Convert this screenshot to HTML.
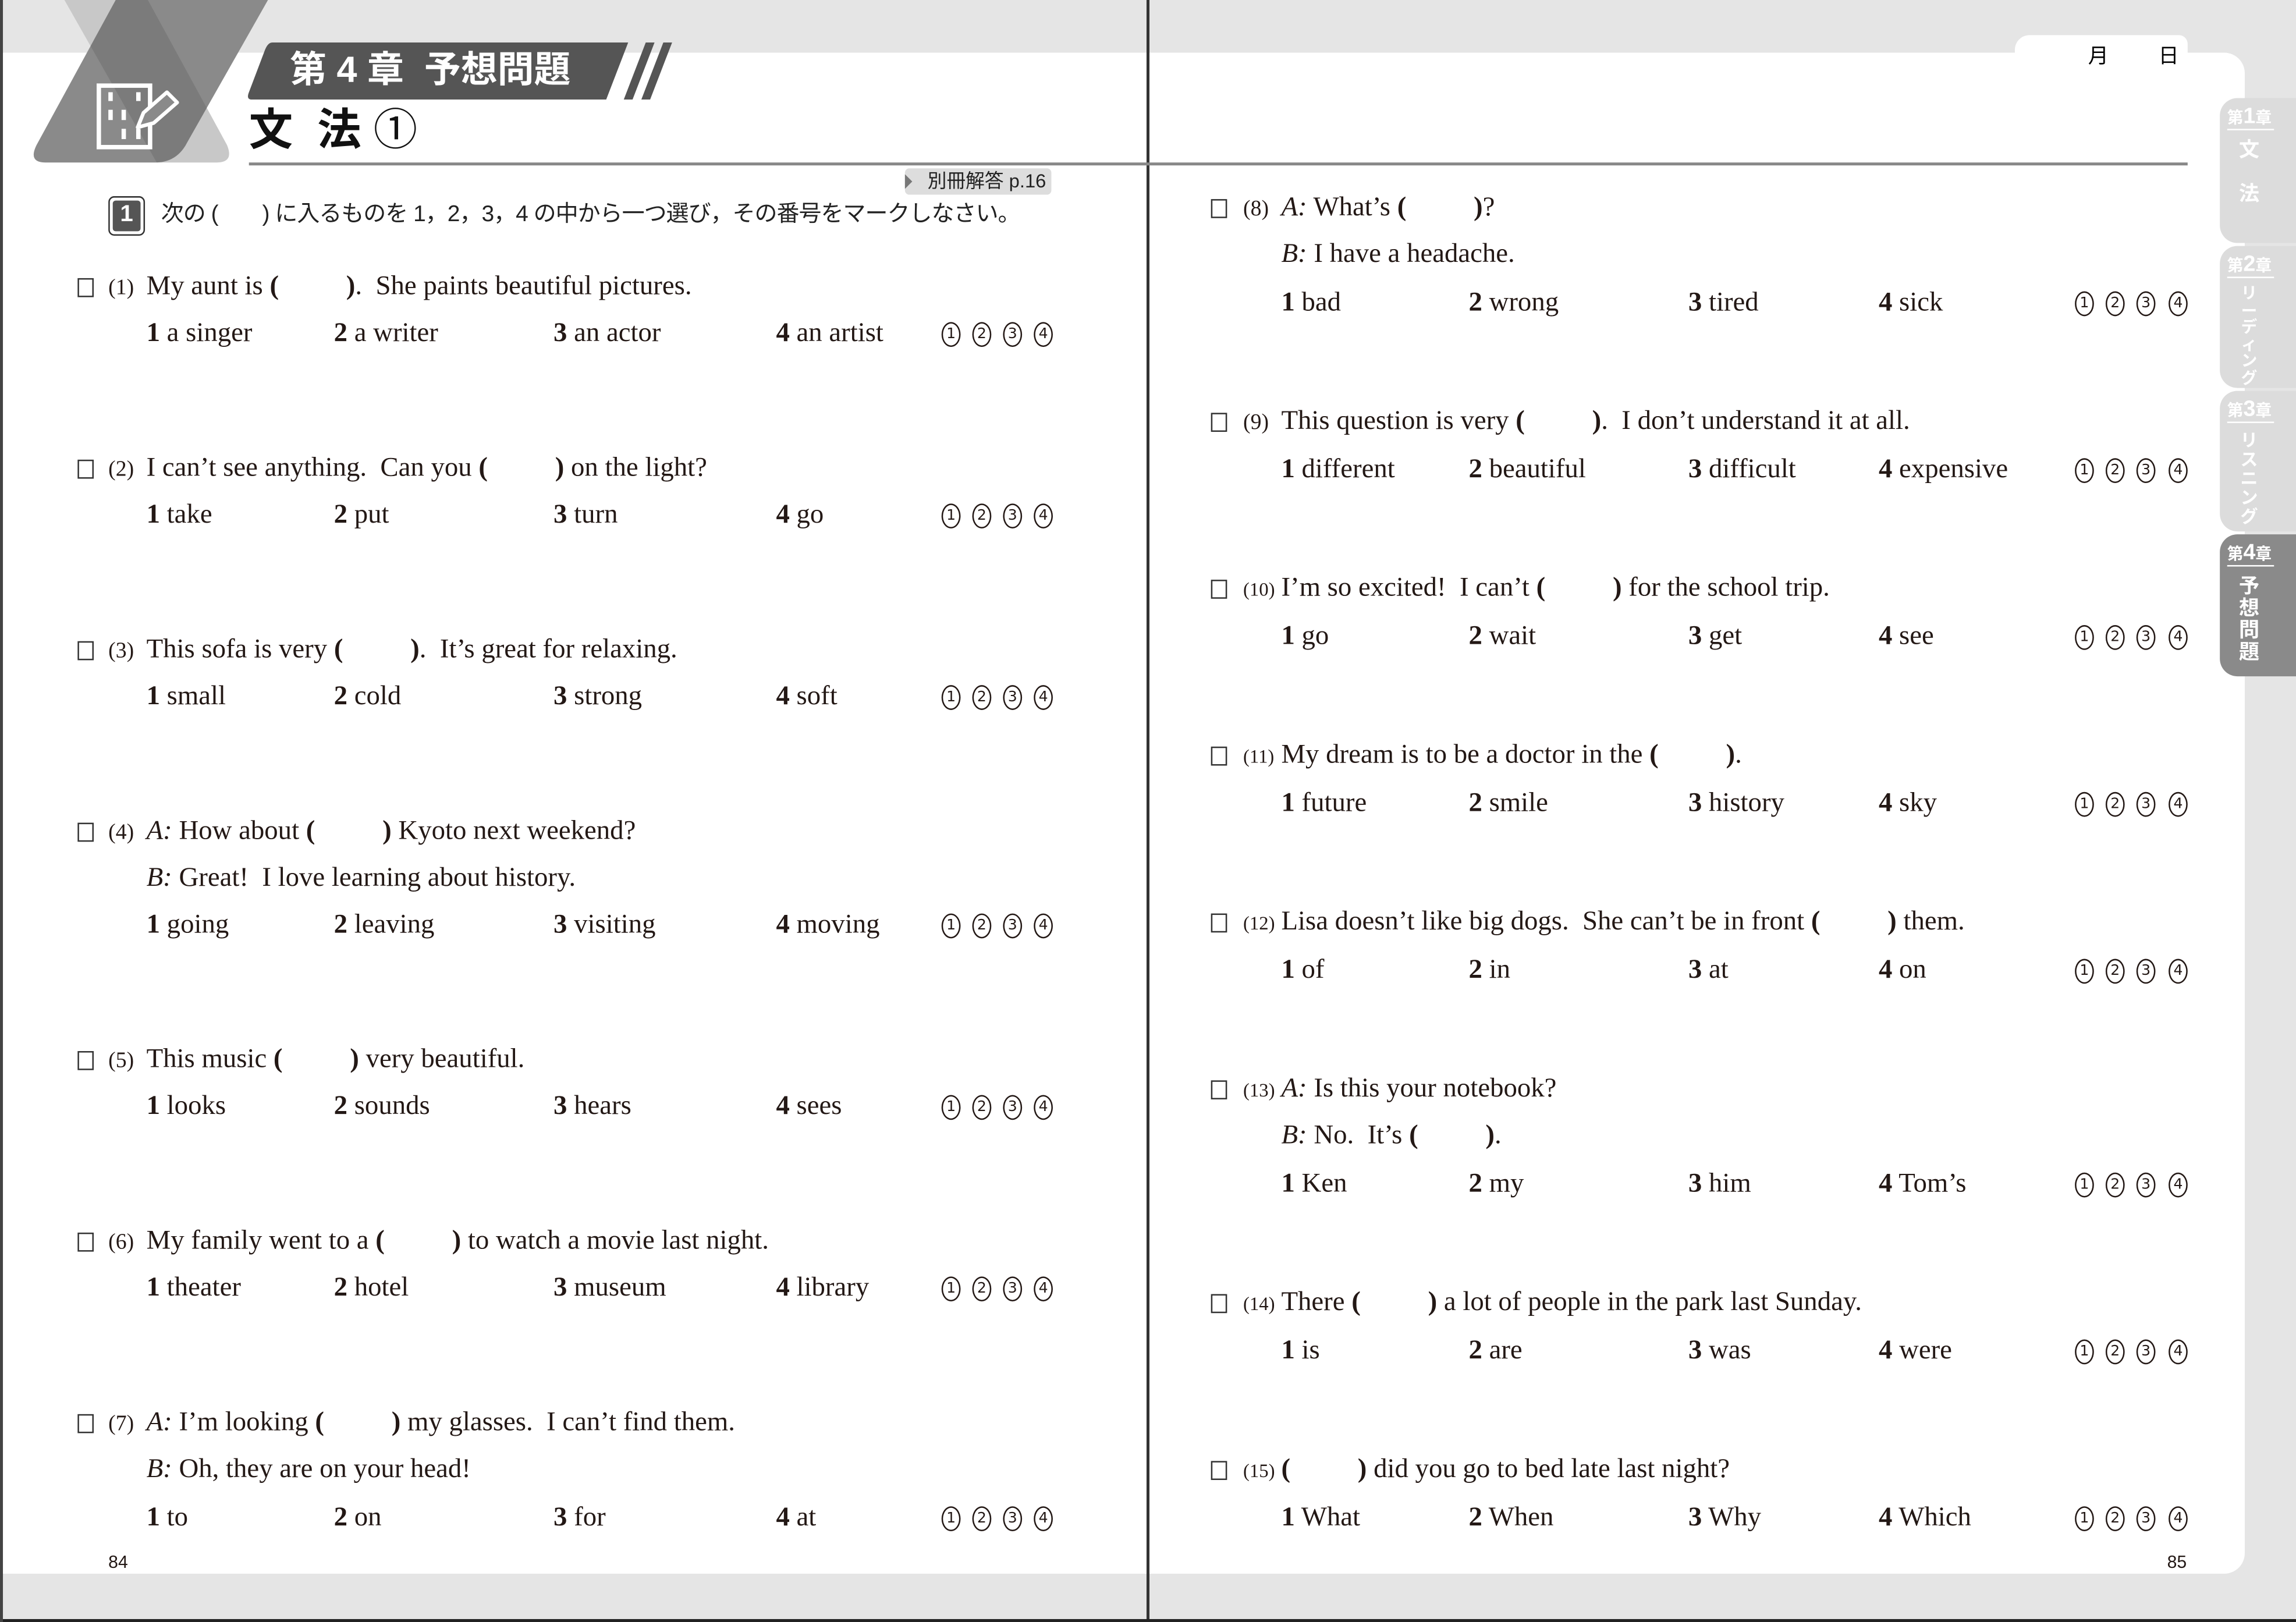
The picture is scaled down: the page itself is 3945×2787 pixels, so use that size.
<!DOCTYPE html>
<html><head><meta charset="utf-8">
<style>
html,body{margin:0;padding:0;background:#e5e5e5;}
body{width:3945px;height:2787px;overflow:hidden;position:relative;}
#w{position:absolute;left:0;top:0;width:1568px;height:1108px;transform-origin:0 0;transform:scale(2.51594,2.51534);background:#e5e5e5;}
.a{position:absolute;}
.t{position:absolute;font-family:"Liberation Serif",serif;font-size:18.6px;line-height:22px;white-space:nowrap;color:#231815;}
.t b{font-weight:bold;}
.n{font-size:15px;display:inline-block;width:26px;}
.bl{display:inline-block;width:46px;}
.cb{position:absolute;width:11px;height:13px;border:1px solid #333;box-sizing:border-box;}
.c{position:absolute;width:13px;height:17px;border:1.2px solid #231815;border-radius:50%;box-sizing:border-box;font-family:"DejaVu Sans",sans-serif;font-size:10px;line-height:15px;text-align:center;color:#231815;}
.jp{font-family:"Liberation Sans","Noto Sans CJK JP",sans-serif;}
.tab{position:absolute;left:1516px;width:60px;border-radius:12px 0 0 12px;color:#fff;font-family:"Liberation Sans","Noto Sans CJK JP",sans-serif;font-weight:bold;overflow:hidden;}
.tab .h{position:absolute;left:5px;top:6px;font-size:11px;width:32px;border-bottom:1px solid #fff;line-height:14px;white-space:nowrap;}
.tab .h span{font-size:15px;}
.tab .v{position:absolute;left:12px;top:28px;width:16px;font-size:14px;line-height:15px;text-align:center;}
</style></head><body>
<div id="w">
<div class="a" style="left:0;top:36px;width:784px;height:1039px;background:#fff;"></div>
<div class="a" style="left:784px;top:36px;width:749px;height:1039px;background:#fff;border-radius:0 14px 14px 0;"></div>
<div class="a" style="left:1376px;top:24px;width:118px;height:20px;background:#fff;border-radius:10px 6px 0 0;"></div>
<div class="a" style="left:783px;top:0;width:1.5px;height:1108px;background:#333;"></div>
<div class="a" style="left:0;top:1106px;width:1568px;height:2px;background:#222;"></div>
<div class="a" style="left:0;top:0;width:1.5px;height:1108px;background:#444;"></div>

<svg class="a" style="left:0;top:0" width="200" height="115" viewBox="0 0 200 115">
<defs><clipPath id="cm"><path d="M79 0H183L128 97Q121 111 106 111H31Q19 111 25 99Z"/></clipPath></defs>
<path d="M44 0H101L155 99Q160 111 148 111H107Z" fill="#c8c8c8"/>
<path d="M79 0H183L128 97Q121 111 106 111H31Q19 111 25 99Z" fill="#8a8a8a"/>
<path d="M44 0H101L155 99Q160 111 148 111H107Z" fill="#000" opacity="0.1" clip-path="url(#cm)"/>
<rect x="67.5" y="58.5" width="35" height="42" fill="none" stroke="#fff" stroke-width="3"/>
<g fill="#fff"><rect x="74" y="63" width="3" height="6"/><rect x="93" y="63" width="3" height="6"/><rect x="74" y="75" width="3" height="7"/><rect x="83" y="75" width="3" height="7"/><rect x="83" y="88" width="3" height="7"/><rect x="93" y="88" width="3" height="7"/></g>
<path d="M94 87L98 77L114 63L121 70L105 84Z" fill="#8a8a8a" stroke="#fff" stroke-width="2.5" stroke-linejoin="round"/>
</svg>
<svg class="a" style="left:168px;top:26px" width="300" height="46" viewBox="0 0 300 46">
<path d="M18 3H261L246 42H4Q0 42 2 37L13 8Q15 3 18 3Z" fill="#555"/>
<path d="M258 42L273 3H279L264 42Z" fill="#555"/>
<path d="M270 42L285 3H291L276 42Z" fill="#555"/>
</svg>
<div class="a jp" style="left:198px;top:31px;font-size:25px;font-weight:bold;color:#fff;line-height:34px;white-space:nowrap;">第 4 章&nbsp; 予想問題</div>
<div class="a jp" style="left:170px;top:72px;font-size:30px;font-weight:bold;color:#111;line-height:36px;white-space:nowrap;">文 &nbsp;法 <span style="font-weight:normal">①</span></div>
<div class="a" style="left:170px;top:111px;width:1324px;height:2px;background:#888;"></div>

<div class="a jp" style="left:618px;top:115px;width:100px;height:18px;background:#ddd;border-radius:3px;font-size:13px;line-height:18px;text-align:right;color:#222;white-space:nowrap;"><span style="position:absolute;left:0;top:4px;border-left:5px solid #777;border-top:5px solid transparent;border-bottom:5px solid transparent;"></span>別冊解答 p.16&nbsp;</div>
<div class="a" style="left:74px;top:134px;width:25px;height:27px;border:1.5px solid #333;border-radius:4px;box-sizing:border-box;padding:2px;"><div style="background:#555;border-radius:2px;width:100%;height:100%;color:#fff;font:bold 16px/20px 'Liberation Sans',sans-serif;text-align:center;">1</div></div>
<div class="a jp" style="left:110px;top:137px;font-size:15.5px;line-height:20px;white-space:nowrap;color:#222;letter-spacing:-0.4px;">次の (　　) に入るものを 1，2，3，4 の中から一つ選び，その番号をマークしなさい。</div>

<div class="a jp" style="left:1426px;top:29px;font-size:14px;line-height:18px;">月</div>
<div class="a jp" style="left:1474px;top:29px;font-size:14px;line-height:18px;">日</div>

<div class="tab" style="top:67px;height:99px;background:#dcdcdc;"><div class="h">第<span>1</span>章</div><div class="v">文<br><br>法</div></div>
<div class="tab" style="top:168px;height:97px;background:#dcdcdc;"><div class="h">第<span>2</span>章</div><div class="v" style="font-size:11px;line-height:11.5px;">リ<br>ー<br>デ<br>ィ<br>ン<br>グ</div></div>
<div class="tab" style="top:267px;height:96px;background:#dcdcdc;"><div class="h">第<span>3</span>章</div><div class="v" style="font-size:12px;line-height:13px;">リ<br>ス<br>ニ<br>ン<br>グ</div></div>
<div class="tab" style="top:365px;height:97px;background:#8a8a8a;"><div class="h">第<span>4</span>章</div><div class="v">予<br>想<br>問<br>題</div></div>

<!-- LEFT PAGE -->
<div class="cb" style="left:53px;top:190px"></div><div class="t" style="left:74px;top:185px"><span class="n">(1)</span>My aunt is <b>(</b><span class="bl"></span><b>)</b>.&nbsp; She paints beautiful pictures.</div>
<div class="t" style="left:100px;top:217px"><b>1</b> a singer</div><div class="t" style="left:228px;top:217px"><b>2</b> a writer</div><div class="t" style="left:378px;top:217px"><b>3</b> an actor</div><div class="t" style="left:530px;top:217px"><b>4</b> an artist</div>
<div class="c" style="left:643px;top:220px">1</div><div class="c" style="left:664px;top:220px">2</div><div class="c" style="left:685px;top:220px">3</div><div class="c" style="left:706px;top:220px">4</div>

<div class="cb" style="left:53px;top:314px"></div><div class="t" style="left:74px;top:309px"><span class="n">(2)</span>I can’t see anything.&nbsp; Can you <b>(</b><span class="bl"></span><b>)</b> on the light?</div>
<div class="t" style="left:100px;top:341px"><b>1</b> take</div><div class="t" style="left:228px;top:341px"><b>2</b> put</div><div class="t" style="left:378px;top:341px"><b>3</b> turn</div><div class="t" style="left:530px;top:341px"><b>4</b> go</div>
<div class="c" style="left:643px;top:344px">1</div><div class="c" style="left:664px;top:344px">2</div><div class="c" style="left:685px;top:344px">3</div><div class="c" style="left:706px;top:344px">4</div>

<div class="cb" style="left:53px;top:438px"></div><div class="t" style="left:74px;top:433px"><span class="n">(3)</span>This sofa is very <b>(</b><span class="bl"></span><b>)</b>.&nbsp; It’s great for relaxing.</div>
<div class="t" style="left:100px;top:465px"><b>1</b> small</div><div class="t" style="left:228px;top:465px"><b>2</b> cold</div><div class="t" style="left:378px;top:465px"><b>3</b> strong</div><div class="t" style="left:530px;top:465px"><b>4</b> soft</div>
<div class="c" style="left:643px;top:468px">1</div><div class="c" style="left:664px;top:468px">2</div><div class="c" style="left:685px;top:468px">3</div><div class="c" style="left:706px;top:468px">4</div>

<div class="cb" style="left:53px;top:562px"></div><div class="t" style="left:74px;top:557px"><span class="n">(4)</span><i>A:</i> How about <b>(</b><span class="bl"></span><b>)</b> Kyoto next weekend?</div>
<div class="t" style="left:100px;top:589px"><i>B:</i> Great!&nbsp; I love learning about history.</div>
<div class="t" style="left:100px;top:621px"><b>1</b> going</div><div class="t" style="left:228px;top:621px"><b>2</b> leaving</div><div class="t" style="left:378px;top:621px"><b>3</b> visiting</div><div class="t" style="left:530px;top:621px"><b>4</b> moving</div>
<div class="c" style="left:643px;top:624px">1</div><div class="c" style="left:664px;top:624px">2</div><div class="c" style="left:685px;top:624px">3</div><div class="c" style="left:706px;top:624px">4</div>

<div class="cb" style="left:53px;top:718px"></div><div class="t" style="left:74px;top:713px"><span class="n">(5)</span>This music <b>(</b><span class="bl"></span><b>)</b> very beautiful.</div>
<div class="t" style="left:100px;top:745px"><b>1</b> looks</div><div class="t" style="left:228px;top:745px"><b>2</b> sounds</div><div class="t" style="left:378px;top:745px"><b>3</b> hears</div><div class="t" style="left:530px;top:745px"><b>4</b> sees</div>
<div class="c" style="left:643px;top:748px">1</div><div class="c" style="left:664px;top:748px">2</div><div class="c" style="left:685px;top:748px">3</div><div class="c" style="left:706px;top:748px">4</div>

<div class="cb" style="left:53px;top:842px"></div><div class="t" style="left:74px;top:837px"><span class="n">(6)</span>My family went to a <b>(</b><span class="bl"></span><b>)</b> to watch a movie last night.</div>
<div class="t" style="left:100px;top:869px"><b>1</b> theater</div><div class="t" style="left:228px;top:869px"><b>2</b> hotel</div><div class="t" style="left:378px;top:869px"><b>3</b> museum</div><div class="t" style="left:530px;top:869px"><b>4</b> library</div>
<div class="c" style="left:643px;top:872px">1</div><div class="c" style="left:664px;top:872px">2</div><div class="c" style="left:685px;top:872px">3</div><div class="c" style="left:706px;top:872px">4</div>

<div class="cb" style="left:53px;top:966px"></div><div class="t" style="left:74px;top:961px"><span class="n">(7)</span><i>A:</i> I’m looking <b>(</b><span class="bl"></span><b>)</b> my glasses.&nbsp; I can’t find them.</div>
<div class="t" style="left:100px;top:993px"><i>B:</i> Oh, they are on your head!</div>
<div class="t" style="left:100px;top:1026px"><b>1</b> to</div><div class="t" style="left:228px;top:1026px"><b>2</b> on</div><div class="t" style="left:378px;top:1026px"><b>3</b> for</div><div class="t" style="left:530px;top:1026px"><b>4</b> at</div>
<div class="c" style="left:643px;top:1029px">1</div><div class="c" style="left:664px;top:1029px">2</div><div class="c" style="left:685px;top:1029px">3</div><div class="c" style="left:706px;top:1029px">4</div>

<div class="t" style="left:74px;top:1056px;font-size:12px;font-family:'Liberation Sans',sans-serif;">84</div>
<div class="t" style="left:1480px;top:1056px;font-size:12px;font-family:'Liberation Sans',sans-serif;">85</div>

<!-- RIGHT PAGE -->
<div class="cb" style="left:827px;top:136px"></div><div class="t" style="left:849px;top:131px"><span class="n">(8)</span><i>A:</i> What’s <b>(</b><span class="bl"></span><b>)</b>?</div>
<div class="t" style="left:875px;top:163px"><i>B:</i> I have a headache.</div>
<div class="t" style="left:875px;top:196px"><b>1</b> bad</div><div class="t" style="left:1003px;top:196px"><b>2</b> wrong</div><div class="t" style="left:1153px;top:196px"><b>3</b> tired</div><div class="t" style="left:1283px;top:196px"><b>4</b> sick</div>
<div class="c" style="left:1417px;top:199px">1</div><div class="c" style="left:1438px;top:199px">2</div><div class="c" style="left:1459px;top:199px">3</div><div class="c" style="left:1481px;top:199px">4</div>

<div class="cb" style="left:827px;top:282px"></div><div class="t" style="left:849px;top:277px"><span class="n">(9)</span>This question is very <b>(</b><span class="bl"></span><b>)</b>.&nbsp; I don’t understand it at all.</div>
<div class="t" style="left:875px;top:310px"><b>1</b> different</div><div class="t" style="left:1003px;top:310px"><b>2</b> beautiful</div><div class="t" style="left:1153px;top:310px"><b>3</b> difficult</div><div class="t" style="left:1283px;top:310px"><b>4</b> expensive</div>
<div class="c" style="left:1417px;top:313px">1</div><div class="c" style="left:1438px;top:313px">2</div><div class="c" style="left:1459px;top:313px">3</div><div class="c" style="left:1481px;top:313px">4</div>

<div class="cb" style="left:827px;top:396px"></div><div class="t" style="left:849px;top:391px"><span class="n" style="font-size:13px">(10)</span>I’m so excited!&nbsp; I can’t <b>(</b><span class="bl"></span><b>)</b> for the school trip.</div>
<div class="t" style="left:875px;top:424px"><b>1</b> go</div><div class="t" style="left:1003px;top:424px"><b>2</b> wait</div><div class="t" style="left:1153px;top:424px"><b>3</b> get</div><div class="t" style="left:1283px;top:424px"><b>4</b> see</div>
<div class="c" style="left:1417px;top:427px">1</div><div class="c" style="left:1438px;top:427px">2</div><div class="c" style="left:1459px;top:427px">3</div><div class="c" style="left:1481px;top:427px">4</div>

<div class="cb" style="left:827px;top:510px"></div><div class="t" style="left:849px;top:505px"><span class="n" style="font-size:13px">(11)</span>My dream is to be a doctor in the <b>(</b><span class="bl"></span><b>)</b>.</div>
<div class="t" style="left:875px;top:538px"><b>1</b> future</div><div class="t" style="left:1003px;top:538px"><b>2</b> smile</div><div class="t" style="left:1153px;top:538px"><b>3</b> history</div><div class="t" style="left:1283px;top:538px"><b>4</b> sky</div>
<div class="c" style="left:1417px;top:541px">1</div><div class="c" style="left:1438px;top:541px">2</div><div class="c" style="left:1459px;top:541px">3</div><div class="c" style="left:1481px;top:541px">4</div>

<div class="cb" style="left:827px;top:624px"></div><div class="t" style="left:849px;top:619px"><span class="n" style="font-size:13px">(12)</span>Lisa doesn’t like big dogs.&nbsp; She can’t be in front <b>(</b><span class="bl"></span><b>)</b> them.</div>
<div class="t" style="left:875px;top:652px"><b>1</b> of</div><div class="t" style="left:1003px;top:652px"><b>2</b> in</div><div class="t" style="left:1153px;top:652px"><b>3</b> at</div><div class="t" style="left:1283px;top:652px"><b>4</b> on</div>
<div class="c" style="left:1417px;top:655px">1</div><div class="c" style="left:1438px;top:655px">2</div><div class="c" style="left:1459px;top:655px">3</div><div class="c" style="left:1481px;top:655px">4</div>

<div class="cb" style="left:827px;top:738px"></div><div class="t" style="left:849px;top:733px"><span class="n" style="font-size:13px">(13)</span><i>A:</i> Is this your notebook?</div>
<div class="t" style="left:875px;top:765px"><i>B:</i> No.&nbsp; It’s <b>(</b><span class="bl"></span><b>)</b>.</div>
<div class="t" style="left:875px;top:798px"><b>1</b> Ken</div><div class="t" style="left:1003px;top:798px"><b>2</b> my</div><div class="t" style="left:1153px;top:798px"><b>3</b> him</div><div class="t" style="left:1283px;top:798px"><b>4</b> Tom’s</div>
<div class="c" style="left:1417px;top:801px">1</div><div class="c" style="left:1438px;top:801px">2</div><div class="c" style="left:1459px;top:801px">3</div><div class="c" style="left:1481px;top:801px">4</div>

<div class="cb" style="left:827px;top:884px"></div><div class="t" style="left:849px;top:879px"><span class="n" style="font-size:13px">(14)</span>There <b>(</b><span class="bl"></span><b>)</b> a lot of people in the park last Sunday.</div>
<div class="t" style="left:875px;top:912px"><b>1</b> is</div><div class="t" style="left:1003px;top:912px"><b>2</b> are</div><div class="t" style="left:1153px;top:912px"><b>3</b> was</div><div class="t" style="left:1283px;top:912px"><b>4</b> were</div>
<div class="c" style="left:1417px;top:915px">1</div><div class="c" style="left:1438px;top:915px">2</div><div class="c" style="left:1459px;top:915px">3</div><div class="c" style="left:1481px;top:915px">4</div>

<div class="cb" style="left:827px;top:998px"></div><div class="t" style="left:849px;top:993px"><span class="n" style="font-size:13px">(15)</span><b>(</b><span class="bl"></span><b>)</b> did you go to bed late last night?</div>
<div class="t" style="left:875px;top:1026px"><b>1</b> What</div><div class="t" style="left:1003px;top:1026px"><b>2</b> When</div><div class="t" style="left:1153px;top:1026px"><b>3</b> Why</div><div class="t" style="left:1283px;top:1026px"><b>4</b> Which</div>
<div class="c" style="left:1417px;top:1029px">1</div><div class="c" style="left:1438px;top:1029px">2</div><div class="c" style="left:1459px;top:1029px">3</div><div class="c" style="left:1481px;top:1029px">4</div>
</div>
</body></html>
